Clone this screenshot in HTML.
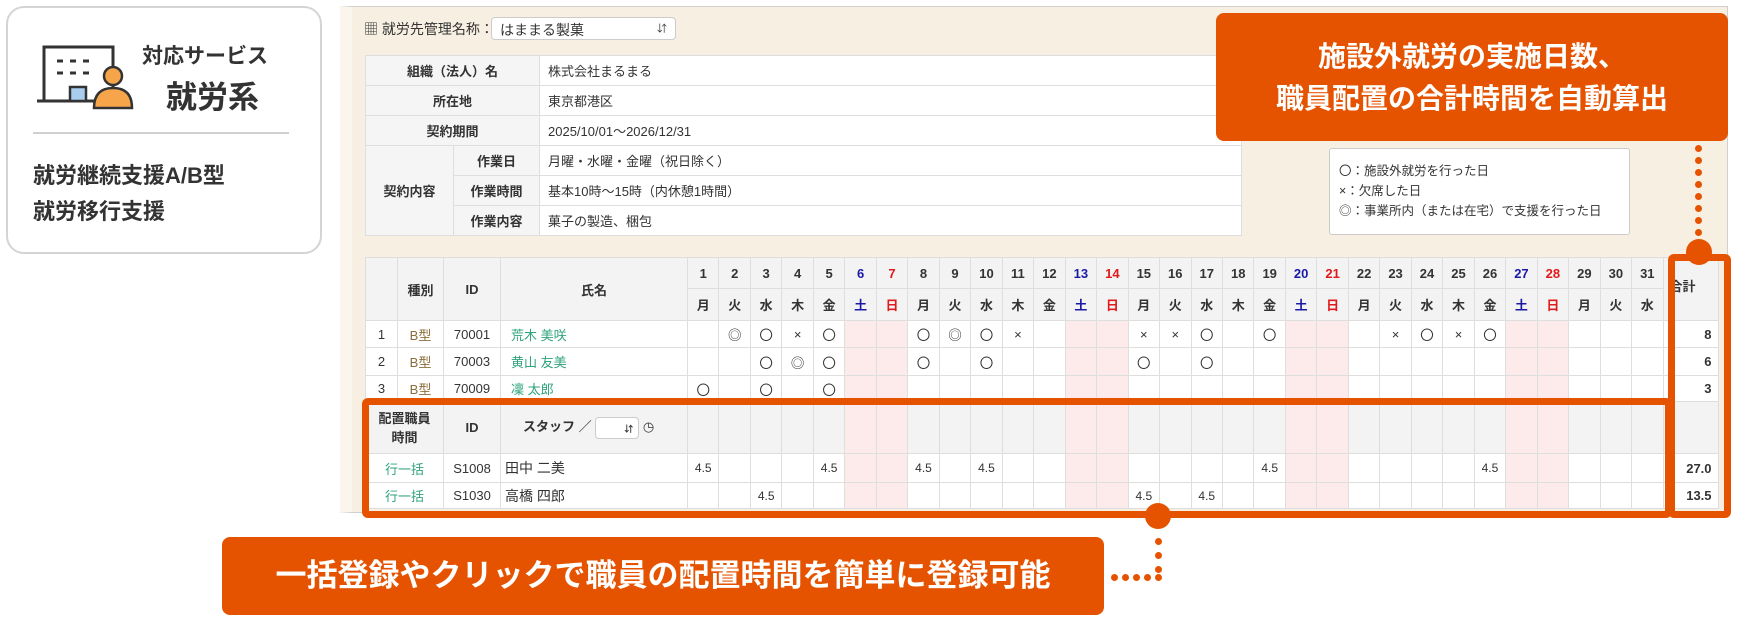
<!DOCTYPE html>
<html><head><meta charset="utf-8"><style>
*{box-sizing:border-box;margin:0;padding:0}
body{width:1744px;height:622px;background:#fff;position:relative;overflow:hidden;font-family:"Liberation Sans","Noto Sans CJK JP",sans-serif;color:#333}
.abs{position:absolute}
.card{left:6px;top:6px;width:316px;height:248px;border:2px solid #d4d4d4;border-radius:18px}
.panel{left:340px;top:6px;width:1388px;height:507px;background:#f7f0e2;border:1px solid #cfcfcf;border-left:12px solid #faf6ee}
table{border-collapse:collapse;table-layout:fixed}
td,th{border:1px solid #dedede;font-size:13px;white-space:nowrap;overflow:hidden}
.info td{height:30px;padding:0 8px;background:#fff}
.info .l{background:#f5f5f5;font-weight:bold;text-align:center}
.main td{text-align:center;background:#fff;padding:0}
.main .h{background:#f3f3f3;font-weight:bold}
.main .we{background:#fdeaea}
.sat{color:#1a1aa6}.sun{color:#e0191b}
.g{color:#2fa37a}.b{color:#8a6d3b}
.orange{background:#e55300;color:#fff;font-weight:bold;border-radius:8px;text-align:center}
.dot{position:absolute;width:7px;height:7px;border-radius:50%;background:#e55300}
.mk{font-size:13.5px}
</style></head><body>
<div class="abs card"></div>
<svg class="abs" style="left:30px;top:40px" width="110" height="75" viewBox="30 40 110 75">
<rect x="44" y="47" width="69" height="54" fill="#fff" stroke="#333" stroke-width="3"/>
<line x1="37" y1="101" x2="98" y2="101" stroke="#333" stroke-width="3"/>
<g stroke="#333" stroke-width="3"><line x1="57" y1="61" x2="63" y2="61"/><line x1="70" y1="61" x2="76" y2="61"/><line x1="83" y1="61" x2="89" y2="61"/><line x1="57" y1="73" x2="63" y2="73"/><line x1="70" y1="73" x2="76" y2="73"/><line x1="83" y1="73" x2="89" y2="73"/></g>
<rect x="70" y="87" width="16" height="14" fill="#a9cdef" stroke="#333" stroke-width="2.5"/>
<circle cx="113" cy="76" r="9" fill="#f7a54a" stroke="#333" stroke-width="2.5"/>
<path d="M94 108 Q94 88 113 88 Q132 88 132 108 Z" fill="#f7a54a" stroke="#333" stroke-width="2.5"/>
</svg>
<div class="abs" style="left:142px;top:40px;font-size:21px;font-weight:bold;color:#333">対応サービス</div>
<div class="abs" style="left:166px;top:72px;font-size:31px;font-weight:bold;color:#333">就労系</div>
<div class="abs" style="left:33px;top:132px;width:256px;height:2px;background:#d0d0d0"></div>
<div class="abs" style="left:33px;top:158px;font-size:22px;font-weight:bold;color:#333;line-height:36px">就労継続支援A/B型<br>就労移行支援</div>

<div class="abs panel"></div>
<div class="abs" style="left:364px;top:19px;font-size:14px">&#9638; 就労先管理名称：</div>
<div class="abs" style="left:491px;top:17px;width:185px;height:23px;background:#fff;border:1px solid #ccc;border-radius:4px;font-size:14px;padding:2px 8px">はままる製菓<span style="float:right;font-size:10px">&#8693;</span></div>

<table class="abs info" style="left:365px;top:55px;width:877px">
<col style="width:88px"><col style="width:86px"><col>
<tr><td class="l" colspan="2">組織（法人）名</td><td>株式会社まるまる</td></tr>
<tr><td class="l" colspan="2">所在地</td><td>東京都港区</td></tr>
<tr><td class="l" colspan="2">契約期間</td><td>2025/10/01～2026/12/31</td></tr>
<tr><td class="l" rowspan="3">契約内容</td><td class="l">作業日</td><td>月曜・水曜・金曜（祝日除く）</td></tr>
<tr><td class="l">作業時間</td><td>基本10時～15時（内休憩1時間）</td></tr>
<tr><td class="l">作業内容</td><td>菓子の製造、梱包</td></tr>
</table>

<div class="abs" style="left:1329px;top:148px;width:301px;height:87px;background:#fff;border:1px solid #ccc;border-radius:3px;font-size:12.5px;line-height:20px;padding:12px 0 0 9px">〇：施設外就労を行った日<br>×：欠席した日<br>◎：事業所内（または在宅）で支援を行った日</div>

<table class="abs main" style="left:365px;top:257px;width:1353px">
<col style="width:32px"><col style="width:46px"><col style="width:57px"><col style="width:187px">
<col style="width:31.48px"><col style="width:31.48px"><col style="width:31.48px"><col style="width:31.48px"><col style="width:31.48px"><col style="width:31.48px"><col style="width:31.48px"><col style="width:31.48px"><col style="width:31.48px"><col style="width:31.48px"><col style="width:31.48px"><col style="width:31.48px"><col style="width:31.48px"><col style="width:31.48px"><col style="width:31.48px"><col style="width:31.48px"><col style="width:31.48px"><col style="width:31.48px"><col style="width:31.48px"><col style="width:31.48px"><col style="width:31.48px"><col style="width:31.48px"><col style="width:31.48px"><col style="width:31.48px"><col style="width:31.48px"><col style="width:31.48px"><col style="width:31.48px"><col style="width:31.48px"><col style="width:31.48px"><col style="width:31.48px"><col style="width:31.48px">
<col style="width:55px">
<tbody id="tb"></tbody>
</table>
<script>
var wd="月火水木金土日";
var r1={2:'◎',3:'〇',4:'×',5:'〇',8:'〇',9:'◎',10:'〇',11:'×',15:'×',16:'×',17:'〇',19:'〇',23:'×',24:'〇',25:'×',26:'〇'};
var r2={3:'〇',4:'◎',5:'〇',8:'〇',10:'〇',15:'〇',17:'〇'};
var r3={1:'〇',3:'〇',5:'〇'};
var s1={1:'4.5',5:'4.5',8:'4.5',10:'4.5',19:'4.5',26:'4.5'};
var s2={3:'4.5',15:'4.5',17:'4.5'};
function we(d){var w=(d-1)%7;return w==5||w==6}
var h='<tr style="height:31px"><td class="h" rowspan="2"></td><td class="h" rowspan="2">種別</td><td class="h" rowspan="2">ID</td><td class="h" rowspan="2">氏名</td>';
for(var d=1;d<=31;d++){var w=(d-1)%7;h+='<td class="h '+(w==5?'sat':w==6?'sun':'')+'">'+d+'</td>';}
h+='<td class="h" rowspan="2" style="text-align:left;padding-left:6px;vertical-align:top;padding-top:18px">合計</td></tr><tr style="height:32px">';
for(var d=1;d<=31;d++){var w=(d-1)%7;h+='<td class="h '+(w==5?'sat':w==6?'sun':'')+'">'+wd[w]+'</td>';}
h+='</tr>';
function row(n,id,name,m,t,ht){var s='<tr style="height:'+ht+'px"><td>'+n+'</td><td class="b">B型</td><td>'+id+'</td><td class="g" style="text-align:left;padding-left:10px">'+name+'</td>';
for(var d=1;d<=31;d++)s+='<td class="'+(we(d)?'we':'')+(m[d]&&m[d]!='×'?' mk':'')+'">'+(m[d]||'')+'</td>';
return s+'<td style="text-align:right;padding-right:6px;font-weight:bold">'+t+'</td></tr>';}
h+=row(1,'70001','荒木 美咲',r1,8,27)+row(2,'70003','黄山 友美',r2,6,28)+row(3,'70009','凜 太郎',r3,3,26);
h+='<tr style="height:52px"><td class="h" colspan="2" style="line-height:19px">配置職員<br>時間</td><td class="h">ID</td><td class="h" style="text-align:left;padding-left:22px">スタッフ ／ <span style="display:inline-block;width:44px;height:22px;border:1px solid #ccc;border-radius:4px;background:#fff;vertical-align:middle;text-align:right;font-size:9px;padding:4px 5px 0 0">&#8693;</span> <span style="font-weight:normal">&#9719;</span></td>';
for(var d=1;d<=31;d++)h+='<td class="'+(we(d)?'we':'h')+'"></td>';
h+='<td class="h"></td></tr>';
function srow(id,name,m,t,ht){var s='<tr style="height:'+ht+'px"><td class="g" colspan="2">行一括</td><td>'+id+'</td><td style="text-align:left;padding-left:4px;font-size:14px">'+name+'</td>';
for(var d=1;d<=31;d++)s+='<td class="'+(we(d)?'we':'')+'" style="font-size:12px">'+(m[d]||'')+'</td>';
return s+'<td style="text-align:right;padding-right:6px;font-weight:bold">'+t+'</td></tr>';}
h+=srow('S1008','田中 二美',s1,'27.0',29)+srow('S1030','高橋 四郎',s2,'13.5',26);
document.getElementById('tb').innerHTML=h;
</script>

<div class="abs" style="left:362px;top:398px;width:1310px;height:120px;border:7px solid #e55300;border-radius:6px"></div>
<div class="abs" style="left:1668px;top:254px;width:63px;height:264px;border:7px solid #e55300;border-radius:6px"></div>
<div class="abs" style="left:1686px;top:239px;width:26px;height:26px;border-radius:50%;background:#e55300"></div>
<div class="abs" style="left:1145px;top:503px;width:26px;height:26px;border-radius:50%;background:#e55300"></div>

<div class="abs orange" style="left:1216px;top:13px;width:512px;height:128px;font-size:28px;line-height:42px;padding-top:23px">施設外就労の実施日数、<br>職員配置の合計時間を自動算出</div>
<div class="dot" style="left:1695px;top:145px"></div><div class="dot" style="left:1695px;top:157px"></div><div class="dot" style="left:1695px;top:169px"></div><div class="dot" style="left:1695px;top:181px"></div><div class="dot" style="left:1695px;top:193px"></div><div class="dot" style="left:1695px;top:205px"></div><div class="dot" style="left:1695px;top:217px"></div><div class="dot" style="left:1695px;top:229px"></div>

<div class="abs orange" style="left:222px;top:537px;width:882px;height:78px;font-size:31px;line-height:78px">一括登録やクリックで職員の配置時間を簡単に登録可能</div>
<div class="dot" style="left:1155px;top:538px"></div><div class="dot" style="left:1155px;top:552px"></div><div class="dot" style="left:1155px;top:566px"></div>
<div class="dot" style="left:1111px;top:574px"></div><div class="dot" style="left:1122px;top:574px"></div><div class="dot" style="left:1133px;top:574px"></div><div class="dot" style="left:1144px;top:574px"></div><div class="dot" style="left:1155px;top:574px"></div>
</body></html>
